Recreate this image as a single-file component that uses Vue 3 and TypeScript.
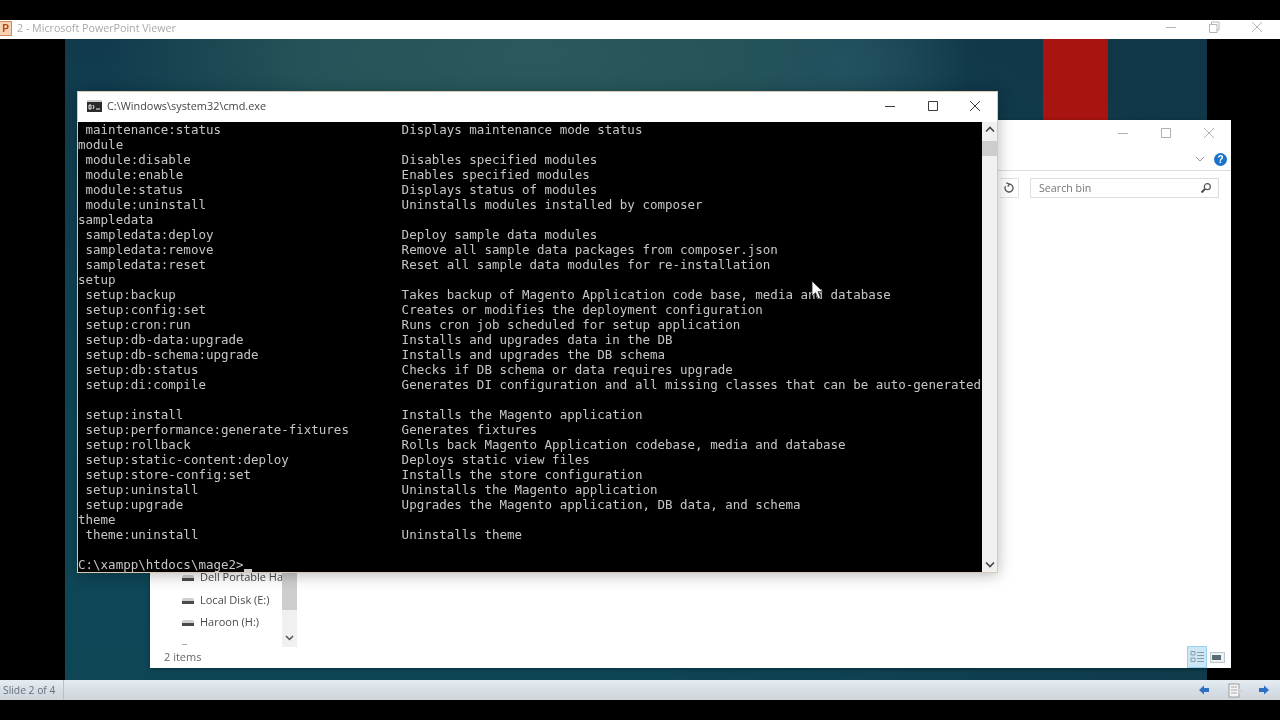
<script setup lang="ts">
interface Row { cmd: string; desc?: string }
const rows: Row[] = [
  { cmd: ' maintenance:status', desc: 'Displays maintenance mode status' },
  { cmd: 'module' },
  { cmd: ' module:disable', desc: 'Disables specified modules' },
  { cmd: ' module:enable', desc: 'Enables specified modules' },
  { cmd: ' module:status', desc: 'Displays status of modules' },
  { cmd: ' module:uninstall', desc: 'Uninstalls modules installed by composer' },
  { cmd: 'sampledata' },
  { cmd: ' sampledata:deploy', desc: 'Deploy sample data modules' },
  { cmd: ' sampledata:remove', desc: 'Remove all sample data packages from composer.json' },
  { cmd: ' sampledata:reset', desc: 'Reset all sample data modules for re-installation' },
  { cmd: 'setup' },
  { cmd: ' setup:backup', desc: 'Takes backup of Magento Application code base, media and database' },
  { cmd: ' setup:config:set', desc: 'Creates or modifies the deployment configuration' },
  { cmd: ' setup:cron:run', desc: 'Runs cron job scheduled for setup application' },
  { cmd: ' setup:db-data:upgrade', desc: 'Installs and upgrades data in the DB' },
  { cmd: ' setup:db-schema:upgrade', desc: 'Installs and upgrades the DB schema' },
  { cmd: ' setup:db:status', desc: 'Checks if DB schema or data requires upgrade' },
  { cmd: ' setup:di:compile', desc: 'Generates DI configuration and all missing classes that can be auto-generated' },
  { cmd: '' },
  { cmd: ' setup:install', desc: 'Installs the Magento application' },
  { cmd: ' setup:performance:generate-fixtures', desc: 'Generates fixtures' },
  { cmd: ' setup:rollback', desc: 'Rolls back Magento Application codebase, media and database' },
  { cmd: ' setup:static-content:deploy', desc: 'Deploys static view files' },
  { cmd: ' setup:store-config:set', desc: 'Installs the store configuration' },
  { cmd: ' setup:uninstall', desc: 'Uninstalls the Magento application' },
  { cmd: ' setup:upgrade', desc: 'Upgrades the Magento application, DB data, and schema' },
  { cmd: 'theme' },
  { cmd: ' theme:uninstall', desc: 'Uninstalls theme' },
  { cmd: '' },
]
const lines = rows.map((r) => (r.desc ? r.cmd.padEnd(43, ' ') + r.desc : r.cmd))
const drives = ['Dell Portable Ha', 'Local Disk (E:)', 'Haroon (H:)']
</script>

<template>
  <div class="screen">
    <div class="letterbox"></div>
    <header class="viewer-title">
      <span class="app-icon">P</span>
      <span class="viewer-name">2 - Microsoft PowerPoint Viewer</span>
      <div class="caption caption-viewer">
        <svg width="14" height="14" viewBox="0 0 14 14"><path d="M2 7.5h10" /></svg>
        <svg width="14" height="14" viewBox="0 0 14 14"><path d="M2.5 4.5h7.5v8h-7.5zM4.5 4.5v-2.500h7.500v8h-2" /></svg>
        <svg width="14" height="14" viewBox="0 0 14 14"><path d="M2 2l10 10M12 2l-10 10" /></svg>
      </div>
    </header>

    <main class="stage">
      <section class="slide">
        <div class="red-block"></div>
      </section>

      <section class="explorer">
        <div class="caption caption-explorer">
          <svg width="14" height="14" viewBox="0 0 14 14"><path d="M2 7.500h10" /></svg>
          <svg width="14" height="14" viewBox="0 0 14 14"><path d="M2.500 2.500h9v9h-9z" /></svg>
          <svg width="14" height="14" viewBox="0 0 14 14"><path d="M2 2l10 10M12 2l-10 10" /></svg>
        </div>
        <div class="ribbon">
          <svg class="ribbon-chevron" width="10" height="6" viewBox="0 0 10 6"><path d="M1 1l4 4 4-4" /></svg>
          <span class="help">?</span>
        </div>
        <div class="address">
          <span class="refresh">
            <svg width="12" height="12" viewBox="0 0 12 12"><path d="M6 2a4 4 0 1 1-3.600 2.300M3.300 .8l2.900 1.200-1.400 2.600" /></svg>
          </span>
          <div class="search">
            <span>Search bin</span>
            <svg width="12" height="12" viewBox="0 0 12 12"><circle cx="7.300" cy="4.700" r="3" /><path d="M5 7l-3.500 3.500" class="handle" /></svg>
          </div>
        </div>
        <div class="explorer-body">
          <ul class="tree">
            <li v-for="d in drives" :key="d">
              <span class="drive"></span><span class="drive-label">{{ d }}</span>
            </li>
            <li class="peek"><span class="drive-tip"></span></li>
          </ul>
          <div class="tree-scroll">
            <div class="tree-thumb"></div>
            <svg width="9" height="6" viewBox="0 0 9 6"><path d="M1 1l3.500 3.500 3.500-3.500" /></svg>
          </div>
        </div>
        <footer class="explorer-status">
          <span class="item-count">2 items</span>
          <div class="views">
            <span class="view view-on">
              <svg width="17" height="16" viewBox="0 0 17 16"><path d="M2 2.500h4v3.500h-4zM2 9h4v3.500h-4zM8 3.500h7M8 6.500h7M8 9.500h7M8 12.500h7" /></svg>
            </span>
            <span class="view">
              <svg width="15" height="11" viewBox="0 0 15 11"><rect x="0.500" y="0.500" width="14" height="10" class="pic" /><rect x="2" y="3" width="9" height="5" class="pic-dark" /></svg>
            </span>
          </div>
        </footer>
      </section>

      <section class="cmd">
        <div class="cmd-title">
          <svg class="cmd-icon" width="15" height="12" viewBox="0 0 15 12">
            <rect width="15" height="12" fill="#2b2b2b" />
            <rect x="0" y="0" width="15" height="2" fill="#cfcfcf" />
            <path d="M2 5h2v4h-2zM6 5l1 2-1 2M9 9h4" fill="none" stroke="#f0f0f0" stroke-width="1" />
          </svg>
          <span class="cmd-name">C:\Windows\system32\cmd.exe</span>
          <div class="caption caption-cmd">
            <svg width="14" height="14" viewBox="0 0 14 14"><path d="M2 7.500h10" /></svg>
            <svg width="14" height="14" viewBox="0 0 14 14"><path d="M2.500 2.500h9v9h-9z" /></svg>
            <svg width="14" height="14" viewBox="0 0 14 14"><path d="M2 2l10 10M12 2l-10 10" /></svg>
          </div>
        </div>
        <div class="cmd-body">
          <pre class="console"><template v-for="(l, i) in lines" :key="i">{{ l }}
</template>C:\xampp\htdocs\mage2&gt;<span class="cursor"></span></pre>
          <div class="cmd-scroll">
            <svg width="10" height="7" viewBox="0 0 10 7"><path d="M1 5.500l4-4 4 4" /></svg>
            <div class="cmd-thumb"></div>
            <svg class="down" width="10" height="7" viewBox="0 0 10 7"><path d="M1 1.500l4 4 4-4" /></svg>
          </div>
        </div>
      </section>

      <svg class="pointer" width="13" height="20" viewBox="0 0 13 20">
        <path d="M1 1v15l3.500-3.300 2.500 6 2.500-1-2.500-6h5z" fill="#fff" stroke="#222" stroke-width="0.800" />
      </svg>
    </main>

    <footer class="viewer-status">
      <span class="slide-count">Slide 2 of 4</span>
      <div class="nav">
        <svg class="nav-prev" width="12" height="10" viewBox="0 0 12 10"><path d="M1 5l5-4.500v2.500h5v4h-5v2.500z" fill="#2f6fc4" /></svg>
        <svg class="nav-page" width="17" height="15" viewBox="0 0 17 15">
          <rect x="2" y="1" width="10" height="13" fill="#f4f4f4" stroke="#9c9c9c" />
          <path d="M4 4h6M4 7h6M4 10h6" stroke="#a8a8a8" fill="none" />
          <path d="M12 5l3.500 3-3.500 3z" fill="#d2d2d2" />
        </svg>
        <svg width="12" height="10" viewBox="0 0 12 10"><path d="M11 5l-5-4.500v2.500h-5v4h5v2.500z" fill="#2f6fc4" /></svg>
      </div>
    </footer>
    <div class="letterbox letterbox-bottom"></div>
  </div>
</template>

<style>
html, body { margin: 0; background: #000; overflow: hidden; }
</style>

<style scoped>
.screen {
  width: 1280px;
  height: 720px;
  display: flex;
  flex-direction: column;
  background: #000;
  font-family: "Open Sans", "Noto Sans", sans-serif;
  overflow: hidden;
  filter: blur(0.35px);
}
.letterbox { height: 20px; background: #000; flex: none; }
.viewer-title {
  height: 19px;
  flex: none;
  background: #fff;
  display: flex;
  align-items: flex-start;
  position: relative;
  z-index: 3;
}
.app-icon {
  width: 11px;
  height: 13px;
  margin-top: 1px;
  background: #f6d3b4;
  border: 1px solid #d58a52;
  border-left: none;
  color: #b4481a;
  font: bold 10px/13px "Liberation Sans", sans-serif;
  text-align: center;
}
.viewer-name { margin-left: 5px; font-size: 10.700px; line-height: 16px; color: #a9a9a9; }
.caption { display: flex; }
.caption svg path { fill: none; stroke: #888; stroke-width: 1; }
.caption-viewer { margin-left: auto; gap: 29px; padding: 0 16px 0 0; }
.caption-viewer svg path { stroke: #b5b5b5; }

.stage { flex: 1; position: relative; display: flex; padding: 0 73px 0 65px; }
.slide {
  flex: 1;
  position: relative;
  background:
    radial-gradient(ellipse 130px 110px at 780px 25px, rgba(36, 84, 100, 0.75) 0%, rgba(36, 84, 100, 0) 100%),
    radial-gradient(ellipse 430px 170px at 470px 15px, #2a5a5c 0%, rgba(42, 90, 92, 0.75) 55%, rgba(42, 90, 92, 0) 100%),
    linear-gradient(90deg, rgba(16, 50, 66, 0) 45%, rgba(16, 50, 66, 0.55) 100%),
    linear-gradient(180deg, #113b4d 0%, #0e4757 60%, #0e4656 100%);
}
.red-block { position: absolute; left: 978px; top: 0; width: 65px; height: 81px; background: #a8140f; }

.explorer {
  position: absolute;
  left: 150px;
  top: 81px;
  width: 1081px;
  height: 548px;
  background: #fff;
  display: flex;
  flex-direction: column;
  box-shadow: 0 1px 4px rgba(0, 0, 0, 0.35);
}
.caption-explorer { justify-content: flex-end; gap: 29px; padding: 6px 15px 0 0; height: 22px; }
.caption-explorer svg path { stroke: #b0b0b0; }
.ribbon {
  height: 22px;
  border-bottom: 1px solid #dcdcdc;
  display: flex;
  justify-content: flex-end;
  align-items: center;
  gap: 9px;
  padding-right: 4px;
}
.ribbon-chevron path { fill: none; stroke: #9a9a9a; }
.help {
  width: 13px;
  height: 13px;
  border-radius: 50%;
  background: #1a74c9;
  color: #fff;
  font: bold 10px/13px "Liberation Sans", sans-serif;
  text-align: center;
}
.address { display: flex; justify-content: flex-end; align-items: center; padding: 7px 12px 0 0; gap: 11px; }
.refresh {
  width: 19px;
  height: 20px;
  box-sizing: border-box;
  border: 1px solid #e2e2e2;
  border-left: none;
  display: flex;
  align-items: center;
  justify-content: center;
}
.refresh path { fill: none; stroke: #555; stroke-width: 1.300; }
.search {
  width: 189px;
  height: 20px;
  border: 1px solid #dcdcdc;
  display: flex;
  align-items: center;
  justify-content: space-between;
  padding: 0 6px 0 8px;
  box-sizing: border-box;
  font-size: 10.700px;
  color: #777;
}
.search circle { fill: none; stroke: #555; stroke-width: 1.200; }
.search .handle { stroke: #444; stroke-width: 1.800; }
.explorer-body { flex: 1; display: flex; align-items: flex-end; min-height: 0; }
.tree { list-style: none; margin: 0; padding: 0 0 0 32px; width: 100px; }
.tree li { height: 22.500px; display: flex; align-items: center; white-space: nowrap; overflow: hidden; }
.tree li.peek { height: 14px; align-items: flex-end; padding-bottom: 2px; box-sizing: border-box; }
.drive-tip { width: 5px; height: 1px; background: #aaa; }
.drive {
  width: 12px;
  height: 6px;
  margin: 3px 6px 0 0;
  flex: none;
  background: linear-gradient(#cfcfcf 0 50%, #4a4a4a 50% 100%);
  border-radius: 2px 2px 0 0;
}
.drive-label { font-size: 11px; color: #4a4a4a; }
.tree-scroll {
  width: 15px;
  height: 82px;
  background: #f0f0f0;
  position: relative;
  display: flex;
  align-items: flex-end;
  justify-content: center;
  padding-bottom: 6px;
  box-sizing: border-box;
}
.tree-thumb { position: absolute; left: 0; top: 0; width: 15px; height: 45px; background: #cdcdcd; }
.tree-scroll path { fill: none; stroke: #505050; stroke-width: 1.500; }
.explorer-status {
  height: 21px;
  flex: none;
  display: flex;
  align-items: flex-end;
  justify-content: space-between;
  padding: 0 6px 0 14px;
  font-size: 11px;
  line-height: 21px;
  color: #666;
}
.item-count { margin-bottom: 1px; }
.views { display: flex; align-items: center; gap: 3px; }
.view { display: flex; align-items: center; justify-content: center; }
.view-on { width: 20px; height: 22px; background: #cce8f7; border: 1px solid #99d1ee; box-sizing: border-box; }
.view-on path { fill: none; stroke: #8d9aa3; }
.pic { fill: #eef1f3; stroke: #c0c6ca; }
.pic-dark { fill: #5a6a72; }

.cmd {
  position: absolute;
  left: 77px;
  top: 52px;
  width: 921px;
  height: 482px;
  display: flex;
  flex-direction: column;
  background: #fff;
  box-sizing: border-box;
  border: 1px solid #d8c9b0;
  box-shadow: 0 2px 14px rgba(0, 0, 0, 0.28);
}
.cmd-title { height: 30px; flex: none; display: flex; align-items: center; padding: 0 0 3px 9px; box-sizing: border-box; }
.cmd-icon { flex: none; }
.cmd-name { margin-left: 5px; font-size: 10.900px; color: #444; }
.caption-cmd { margin-left: auto; gap: 28.500px; padding-right: 15px; }
.caption-cmd svg path { stroke: #3a3a3a; }
.cmd-body { flex: 1; display: flex; min-height: 0; }
.console {
  margin: 0;
  width: 904px;
  flex: none;
  background: #000;
  color: #c6c6c6;
  font: 12.500px/15px "DejaVu Sans Mono", "Liberation Mono", monospace;
  overflow: hidden;
  white-space: pre;
}
.cursor { display: inline-block; width: 8px; height: 3px; background: #ccc; vertical-align: -3px; }
.cmd-scroll {
  flex: 1;
  background: #f0f0f0;
  display: flex;
  flex-direction: column;
  align-items: center;
  padding: 4px 0;
  box-sizing: border-box;
}
.cmd-scroll path { fill: none; stroke: #444; stroke-width: 1.600; }
.cmd-thumb { width: 15px; height: 15px; margin-top: 8px; background: #cdcdcd; }
.cmd-scroll .down { margin-top: auto; }
.pointer { position: absolute; left: 811px; top: 241px; }

.viewer-status {
  height: 20px;
  flex: none;
  margin-top: -1px;
  position: relative;
  background: linear-gradient(#e6eef4, #d7dfe6 50%, #cfd6dc);
  display: flex;
  align-items: center;
  justify-content: space-between;
  font-size: 10.300px;
  color: #667078;
}
.slide-count { padding: 0 8px 0 3px; line-height: 20px; border-right: 1px solid #b9c1c8; }
.nav { display: flex; align-items: center; padding-right: 10px; }
.nav-page { margin: 0 14px 0 17px; }
.letterbox-bottom { height: 20px; }
</style>
